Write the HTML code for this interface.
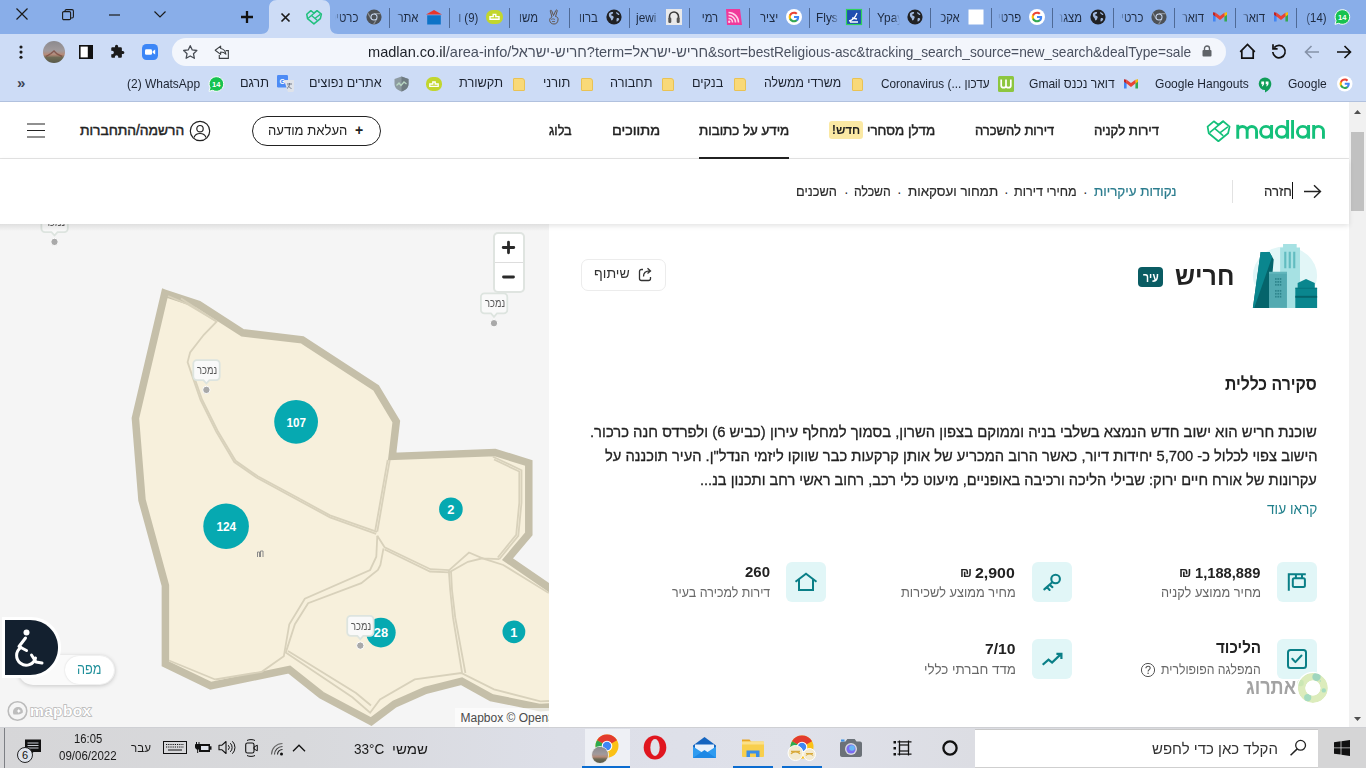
<!DOCTYPE html>
<html lang="he">
<head>
<meta charset="utf-8">
<title>madlan</title>
<style>
*{box-sizing:border-box;margin:0;padding:0}
html,body{width:1366px;height:768px;overflow:hidden;background:#fff;font-family:"Liberation Sans",sans-serif;color:#222}
.a{position:absolute;white-space:nowrap}
.r{direction:rtl}
svg{position:absolute;overflow:visible}
#tabbar{left:0;top:0;width:1366px;height:34px;background:#89aee9}
#toolbar{left:0;top:34px;width:1366px;height:36px;background:#cddcf6}
#bmbar{left:0;top:70px;width:1366px;height:32px;background:#cddcf6}
.sep{position:absolute;top:7.5px;width:1px;height:20px;background:#4f6a96}
.tt{position:absolute;top:8.5px;height:17px;font-size:13.2px;line-height:17px;color:#1d2a40;white-space:nowrap;overflow:hidden;direction:rtl;text-align:right}
.fav{position:absolute;top:9px}
.bm{position:absolute;top:78px;font-size:12px;line-height:14px;color:#1c2330;white-space:nowrap}
.fold{position:absolute;top:77.5px;width:11.5px;height:13.5px;background:#f9d978;border:1px solid #e9c254;border-radius:1px 3px 1px 1px}
.nv{top:121px;font-size:14.500px;line-height:18px;font-weight:bold;color:#222}
.sn{top:182.800px;font-size:14px;line-height:18px;color:#333}
.sb{width:40px;height:40px;border-radius:6px;background:#e1f6f7}
.ts{display:inline-block;transform:scaleX(.86);transform-origin:100% 50%}
.tl{display:inline-block;transform:scaleX(.9);transform-origin:0 50%}
</style>
</head>
<body>
<!-- ============ TAB BAR ============ -->
<div id="tabbar" class="a"></div>
<div id="toolbar" class="a"></div>
<div id="bmbar" class="a"></div>
<div class="a" style="left:0;top:101px;width:1366px;height:1px;background:#b1c1de"></div>
<!--TABS-->
<svg class="fav" style="left:1334.0px;top:9px" width="16" height="16" viewBox="0 0 16 16"><path d="M1 15.300l1.100-3.600A7.300 7.300 0 1 1 4.700 14.300z" fill="#17c24f" stroke="#fff" stroke-width="1" stroke-linejoin="round"/><text x="8.200" y="10.700" font-family="Liberation Sans" font-size="7.500" font-weight="bold" fill="#fff" text-anchor="middle">14</text></svg>
<div class="tt" style="left:1303.0px;width:23px;-webkit-mask-image:linear-gradient(to right,transparent 0,#000 7px)"><span class="ts">(14)</span></div>
<svg class="fav" style="left:1273.0px;top:9px" width="16" height="16" viewBox="0 0 16 16"><path d="M1 3.200v9.300h2.600V6.400z" fill="#4285F4"/><path d="M15 3.200v9.300h-2.600V6.400z" fill="#34A853"/><path d="M12.400 3.700 15 3.200v2.500l-2.600 2z" fill="#FBBC05"/><path d="M3.600 3.700 1 3.200v2.500l2.600 2z" fill="#C5221F"/><path d="M3.600 3.700 8 7.100l4.400-3.400v3.900L8 11 3.600 7.600z" fill="#EA4335"/></svg>
<div class="tt" style="left:1242.0px;width:23px;-webkit-mask-image:linear-gradient(to right,transparent 0,#000 7px)"><span class="ts">דואר</span></div>
<div class="sep" style="left:1296.0px"></div>
<svg class="fav" style="left:1212.0px;top:9px" width="16" height="16" viewBox="0 0 16 16"><path d="M1 3.200v9.300h2.600V6.400z" fill="#4285F4"/><path d="M15 3.200v9.300h-2.600V6.400z" fill="#34A853"/><path d="M12.400 3.700 15 3.200v2.500l-2.600 2z" fill="#FBBC05"/><path d="M3.600 3.700 1 3.200v2.500l2.600 2z" fill="#C5221F"/><path d="M3.600 3.700 8 7.100l4.400-3.400v3.900L8 11 3.600 7.600z" fill="#EA4335"/></svg>
<div class="tt" style="left:1181.0px;width:23px;-webkit-mask-image:linear-gradient(to right,transparent 0,#000 7px)"><span class="ts">דואר</span></div>
<div class="sep" style="left:1235.0px"></div>
<svg class="fav" style="left:1151.0px;top:9px" width="16" height="16" viewBox="0 0 16 16"><circle cx="8" cy="8" r="7.600" fill="#4d5156"/><path d="M8 4.600h6.800M5.100 9.700 1.700 3.900M10.900 9.700 7.500 15.500" stroke="#8a8f96" stroke-width="1.200"/><circle cx="8" cy="8" r="3.500" fill="#cddcf6"/><circle cx="8" cy="8" r="2.500" fill="#4d5156"/></svg>
<div class="tt" style="left:1120.0px;width:23px;-webkit-mask-image:linear-gradient(to right,transparent 0,#000 7px)"><span class="ts">כרטיס</span></div>
<div class="sep" style="left:1174.0px"></div>
<svg class="fav" style="left:1090.0px;top:9px" width="16" height="16" viewBox="0 0 16 16"><circle cx="8" cy="8" r="7.600" fill="#202124"/><path d="M3 4.500c1.500-1.500 3-1.800 4-1.500 .5 1-.5 2-1.500 2.300-.8.500-.3 1.500.7 1.500 1.200.2 1.800 1 1.300 2.200-.5 1-1 2.500-2 2.500-.8-.800-.5-2-1.300-2.700C3.200 8 2.500 6.500 3 4.500zM10 3c1.500.3 3 1.500 3.500 3-.8.300-1.500 0-2-.8-.8-.2-1.500-1.200-1.500-2.200zM11 9c1-.3 2 .2 2.300 1-.5 1.300-1.500 2.300-2.500 2.800-.5-1.200-.4-2.800.2-3.800z" fill="#9fb6dc"/></svg>
<div class="tt" style="left:1059.0px;width:23px;-webkit-mask-image:linear-gradient(to right,transparent 0,#000 7px)"><span class="ts">מצגת</span></div>
<div class="sep" style="left:1113.0px"></div>
<svg class="fav" style="left:1029.0px;top:9px" width="16" height="16" viewBox="0 0 48 48"><circle cx="24" cy="24" r="24" fill="#fff"/><g transform="translate(6.500,6.500) scale(.73)"><path fill="#4285F4" d="M45.1 24.5c0-1.6-.1-3.100-.4-4.500H24v8.500h11.800c-.5 2.700-2.100 5.100-4.400 6.600v5.500h7.100c4.200-3.800 6.600-9.500 6.600-16.100z"/><path fill="#34A853" d="M24 46c5.900 0 10.900-2 14.500-5.300l-7.100-5.500c-2 1.300-4.500 2.100-7.400 2.100-5.700 0-10.500-3.800-12.300-9H4.400v5.700C8 41.100 15.400 46 24 46z"/><path fill="#FBBC05" d="M11.700 28.300c-.4-1.300-.7-2.800-.7-4.300s.3-2.900.7-4.300V14H4.400C2.900 17 2 20.400 2 24s.9 7 2.400 10l7.300-5.700z"/><path fill="#EA4335" d="M24 10.700c3.200 0 6.100 1.100 8.400 3.300l6.300-6.300C34.900 4.200 29.900 2 24 2 15.400 2 8 6.900 4.400 14l7.300 5.700c1.800-5.200 6.600-9 12.300-9z"/></g></svg>
<div class="tt" style="left:998.0px;width:23px;-webkit-mask-image:linear-gradient(to right,transparent 0,#000 7px)"><span class="ts">פרטי</span></div>
<div class="sep" style="left:1052.0px"></div>
<svg class="fav" style="left:968.0px;top:9px" width="16" height="16" viewBox="0 0 16 16"><rect x="0.500" y="0.500" width="15" height="15" fill="#fff"/></svg>
<div class="tt" style="left:937.0px;width:23px;-webkit-mask-image:linear-gradient(to right,transparent 0,#000 7px)"><span class="ts">אקכ</span></div>
<div class="sep" style="left:991.0px"></div>
<svg class="fav" style="left:907.0px;top:9px" width="16" height="16" viewBox="0 0 16 16"><circle cx="8" cy="8" r="7.600" fill="#202124"/><path d="M3 4.500c1.500-1.500 3-1.800 4-1.500 .5 1-.5 2-1.500 2.300-.8.500-.3 1.500.7 1.500 1.200.2 1.800 1 1.300 2.200-.5 1-1 2.500-2 2.500-.8-.800-.5-2-1.300-2.700C3.200 8 2.500 6.500 3 4.500zM10 3c1.500.3 3 1.500 3.500 3-.8.300-1.500 0-2-.8-.8-.2-1.500-1.200-1.500-2.200zM11 9c1-.3 2 .2 2.300 1-.5 1.300-1.500 2.300-2.500 2.800-.5-1.200-.4-2.800.2-3.800z" fill="#9fb6dc"/></svg>
<div class="tt" style="left:877.0px;width:23px;direction:ltr;text-align:left;-webkit-mask-image:linear-gradient(to left,transparent 0,#000 7px)"><span class="tl">Ypay</span></div>
<div class="sep" style="left:930.0px"></div>
<svg class="fav" style="left:846.0px;top:9px" width="16" height="16" viewBox="0 0 16 16"><rect x="0.500" y="0.500" width="15" height="15" fill="#1f4fb0" stroke="#2fd35a" stroke-width="1.200"/><path d="M3 12c3-.5 6-3 8-8M4 13h8M6 9l5 1" stroke="#fff" stroke-width="1.300" fill="none"/></svg>
<div class="tt" style="left:816.0px;width:23px;direction:ltr;text-align:left;-webkit-mask-image:linear-gradient(to left,transparent 0,#000 7px)"><span class="tl">Flys</span></div>
<div class="sep" style="left:869.0px"></div>
<svg class="fav" style="left:786.0px;top:9px" width="16" height="16" viewBox="0 0 48 48"><circle cx="24" cy="24" r="24" fill="#fff"/><g transform="translate(6.500,6.500) scale(.73)"><path fill="#4285F4" d="M45.1 24.5c0-1.6-.1-3.100-.4-4.500H24v8.500h11.800c-.5 2.700-2.100 5.100-4.400 6.600v5.500h7.100c4.200-3.800 6.600-9.500 6.600-16.100z"/><path fill="#34A853" d="M24 46c5.900 0 10.900-2 14.500-5.300l-7.100-5.500c-2 1.300-4.500 2.100-7.400 2.100-5.700 0-10.500-3.800-12.300-9H4.400v5.700C8 41.100 15.400 46 24 46z"/><path fill="#FBBC05" d="M11.700 28.300c-.4-1.300-.7-2.800-.7-4.300s.3-2.900.7-4.300V14H4.400C2.900 17 2 20.400 2 24s.9 7 2.400 10l7.300-5.700z"/><path fill="#EA4335" d="M24 10.700c3.200 0 6.100 1.100 8.400 3.300l6.300-6.300C34.900 4.200 29.900 2 24 2 15.400 2 8 6.900 4.400 14l7.300 5.700c1.800-5.200 6.600-9 12.300-9z"/></g></svg>
<div class="tt" style="left:755.0px;width:23px;-webkit-mask-image:linear-gradient(to right,transparent 0,#000 7px)"><span class="ts">יציר</span></div>
<div class="sep" style="left:809.0px"></div>
<svg class="fav" style="left:726.0px;top:9px" width="16" height="16" viewBox="0 0 16 16"><path d="M0 0h14l2 16H1z" fill="#f0389a"/><path d="M2.500 6.500a7 7 0 0 1 7 7M2.500 3.500a10 10 0 0 1 10 10M2.500 9.500a4 4 0 0 1 4 4" stroke="#ffd0e8" stroke-width="1.600" fill="none"/><circle cx="3.200" cy="12.800" r="1.200" fill="#ffd0e8"/></svg>
<div class="tt" style="left:695.0px;width:23px;-webkit-mask-image:linear-gradient(to right,transparent 0,#000 7px)"><span class="ts">רמי</span></div>
<div class="sep" style="left:749.0px"></div>
<svg class="fav" style="left:666.0px;top:9px" width="16" height="16" viewBox="0 0 16 16"><rect width="16" height="16" fill="#e9e9ea"/><path d="M3.500 10V7.500a4.500 4.500 0 0 1 9 0V10" stroke="#3a3a3a" stroke-width="1.600" fill="none"/><rect x="2.300" y="8.500" width="3" height="5.500" rx="1.200" fill="#555"/><rect x="10.700" y="8.500" width="3" height="5.500" rx="1.200" fill="#555"/></svg>
<div class="tt" style="left:636.0px;width:23px;direction:ltr;text-align:left;-webkit-mask-image:linear-gradient(to left,transparent 0,#000 7px)"><span class="tl">jewi</span></div>
<div class="sep" style="left:689.0px"></div>
<svg class="fav" style="left:606.0px;top:9px" width="16" height="16" viewBox="0 0 16 16"><circle cx="8" cy="8" r="7.600" fill="#202124"/><path d="M3 4.500c1.500-1.500 3-1.800 4-1.500 .5 1-.5 2-1.500 2.300-.8.500-.3 1.500.7 1.500 1.200.2 1.800 1 1.300 2.200-.5 1-1 2.500-2 2.500-.8-.800-.5-2-1.300-2.700C3.200 8 2.500 6.500 3 4.500zM10 3c1.500.3 3 1.500 3.500 3-.8.300-1.500 0-2-.8-.8-.2-1.500-1.200-1.500-2.200zM11 9c1-.3 2 .2 2.300 1-.5 1.300-1.500 2.300-2.500 2.800-.5-1.200-.4-2.800.2-3.800z" fill="#9fb6dc"/></svg>
<div class="tt" style="left:575.0px;width:23px;-webkit-mask-image:linear-gradient(to right,transparent 0,#000 7px)"><span class="ts">ברוו</span></div>
<div class="sep" style="left:629.0px"></div>
<svg class="fav" style="left:546.0px;top:9px" width="16" height="16" viewBox="0 0 16 16"><path d="M6 8 4.300 2.200c-.3-1 1-1.400 1.400-.4L7.500 6.500 9.800 1.500c.4-1 1.800-.5 1.400.5L9.500 7.500c2 .3 2.800 1.500 2.500 3.500-.3 2.500-1.500 4-4 4-2.300 0-3.800-1.200-4.300-3.300-.3-1.500.5-2.700 1.600-3.200z" fill="none" stroke="#5b4a3a" stroke-width="0.900"/><path d="M5 10.500c1-.8 2.800-.8 4 0M6 12.500h3" stroke="#5b4a3a" stroke-width="0.700" fill="none"/></svg>
<div class="tt" style="left:515.0px;width:23px;-webkit-mask-image:linear-gradient(to right,transparent 0,#000 7px)"><span class="ts">משו</span></div>
<div class="sep" style="left:569.0px"></div>
<svg class="fav" style="left:486.0px;top:9px" width="17" height="16" viewBox="0 0 17 16"><rect x="0" y="1" width="17" height="14" rx="6.500" fill="#c2d62e"/><path d="M4 10.200h9v-2.600h-3.200V5.400H7.200v2.200H4z" fill="none" stroke="#fff" stroke-width="1.400"/></svg>
<div class="tt" style="left:455.0px;width:23px;-webkit-mask-image:linear-gradient(to right,transparent 0,#000 7px)"><span class="ts">(9) ו</span></div>
<div class="sep" style="left:509.0px"></div>
<svg class="fav" style="left:426.0px;top:9px" width="16" height="16" viewBox="0 0 16 16"><path d="M0 5.500 8 1l8 4.500z" fill="#e8352a"/><rect x="1.200" y="6.300" width="13.600" height="9.200" fill="#0d73c7"/></svg>
<div class="tt" style="left:395.0px;width:23px;-webkit-mask-image:linear-gradient(to right,transparent 0,#000 7px)"><span class="ts">אתר</span></div>
<div class="sep" style="left:449.0px"></div>
<svg class="fav" style="left:366.0px;top:9px" width="16" height="16" viewBox="0 0 16 16"><circle cx="8" cy="8" r="7.600" fill="#4d5156"/><path d="M8 4.600h6.800M5.100 9.700 1.700 3.900M10.900 9.700 7.500 15.500" stroke="#8a8f96" stroke-width="1.200"/><circle cx="8" cy="8" r="3.500" fill="#cddcf6"/><circle cx="8" cy="8" r="2.500" fill="#4d5156"/></svg>
<div class="tt" style="left:335.0px;width:23px;-webkit-mask-image:linear-gradient(to right,transparent 0,#000 7px)"><span class="ts">כרטיס</span></div>
<div class="sep" style="left:389.0px"></div>
<svg style="left:261px;top:0" width="78" height="34" viewBox="0 0 78 34"><path d="M0 34c5 0 8-3 8-8V8c0-5 3-8 8-8h45c5 0 8 3 8 8v18c0 5 3 8 8 8z" fill="#cddcf6"/></svg>
<svg class="fav" style="left:305px;top:9.5px" width="18" height="16" viewBox="0 0 18 16"><g transform="translate(9.050,7.300) scale(.665) translate(-1218.600,-131.250)" fill="none" stroke="#21c07e" stroke-linejoin="round" stroke-linecap="round"><path d="M1213.800 121.300 1207.600 126.600 1208.800 133.300 1218.400 141.200 1228.100 133.300 1229.600 126.600 1223.100 121.300 1218.400 124.800z" stroke-width="2.300"/><path d="M1223.100 121.300 1210.200 132.200M1215.200 128.900 1222.800 135.400M1227.500 127.200 1220.200 132.700" stroke-width="2"/></g></svg>
<svg style="left:279.500px;top:11.500px" width="11" height="11" viewBox="0 0 11 11"><path d="M1.500 1.500l8 8M9.500 1.500l-8 8" stroke="#1b1b1b" stroke-width="1.700"/></svg>
<svg style="left:240px;top:10px" width="14" height="14" viewBox="0 0 14 14"><path d="M7 1v12M1 7h12" stroke="#111" stroke-width="2.300"/></svg>
<svg style="left:153px;top:10px" width="14" height="9" viewBox="0 0 14 9"><path d="M1.500 1.500 7 7l5.500-5.500" stroke="#1b1b1b" stroke-width="1.200" fill="none"/></svg>
<svg style="left:109px;top:14px" width="11" height="2" viewBox="0 0 11 2"><path d="M0 1h11" stroke="#1b1b1b" stroke-width="1.200"/></svg>
<svg style="left:62px;top:9px" width="12" height="11" viewBox="0 0 12 11"><rect x="0.600" y="2.600" width="8" height="8" rx="1.200" fill="none" stroke="#1b1b1b" stroke-width="1.100"/><path d="M3 2.600V2c0-.8.600-1.400 1.400-1.400H10c.8 0 1.400.600 1.400 1.400v5.600c0 .8-.6 1.400-1.400 1.400h-1.400" fill="none" stroke="#1b1b1b" stroke-width="1.100"/></svg>
<svg style="left:16px;top:8px" width="12" height="12" viewBox="0 0 12 12"><path d="M0.500 0.500l11 11M11.500 0.500l-11 11" stroke="#1b1b1b" stroke-width="1.200"/></svg>
<!--/TABS-->
<!--TOOLBAR-->
<!-- URL pill -->
<div class="a" style="left:172px;top:38px;width:1053.500px;height:28px;border-radius:14px;background:#f3f6fc"></div>
<!-- lock -->
<svg style="left:1202px;top:45px" width="10" height="12" viewBox="0 0 10 12"><rect x="0.500" y="5" width="9" height="6.500" rx="1" fill="#5f6368"/><path d="M2.500 5V3.500a2.500 2.500 0 0 1 5 0V5" stroke="#5f6368" stroke-width="1.400" fill="none"/></svg>
<!-- star -->
<svg style="left:182px;top:44px" width="16.500" height="16.500" viewBox="0 0 18 18"><path d="M9 1.800l2.200 4.700 5 .6-3.700 3.500 1 5L9 13.100l-4.500 2.500 1-5L1.800 7.100l5-.6z" fill="none" stroke="#474c54" stroke-width="1.400" stroke-linejoin="round"/></svg>
<!-- share -->
<svg style="left:213.500px;top:45.300px" width="16" height="14.500" viewBox="0 0 17 16"><path d="M7 1.200 1 5.800l6 4.600V7.800c2.500 0 4.300.6 5.800 2.400C12.300 6.500 10 4.300 7 3.900z" fill="none" stroke="#3c4043" stroke-width="1.200" stroke-linejoin="round"/><path d="M5.500 11v3.800h10V6.200h-3" fill="none" stroke="#3c4043" stroke-width="1.200"/></svg>
<!-- zoom ext -->
<svg style="left:142px;top:44px" width="16" height="16" viewBox="0 0 16 16"><rect width="16" height="16" rx="4.500" fill="#3b86f7"/><rect x="3" y="5.200" width="7" height="5.600" rx="1.300" fill="#fff"/><path d="M10.600 7.300 13.200 5.600v4.800L10.600 8.700z" fill="#fff"/></svg>
<!-- puzzle -->
<svg style="left:110px;top:44px" width="15" height="15" viewBox="0 0 24 24"><path d="M20.500 11H19V7c0-1.100-.9-2-2-2h-4V3.500a2.500 2.500 0 0 0-5 0V5H4c-1.100 0-2 .9-2 2v3.800h1.500a2.700 2.700 0 0 1 0 5.400H2V20c0 1.100.9 2 2 2h3.800v-1.500a2.700 2.700 0 0 1 5.400 0V22H17c1.100 0 2-.9 2-2v-4h1.500a2.500 2.500 0 0 0 0-5z" fill="#1b1b1b"/></svg>
<!-- side panel -->
<svg style="left:79px;top:45px" width="14" height="14" viewBox="0 0 14 14"><rect x="0.800" y="0.800" width="12.400" height="12.400" fill="#fff" stroke="#111" stroke-width="1.600"/><rect x="8.800" y="0.800" width="4.400" height="12.400" fill="#111"/></svg>
<!-- avatar -->
<div class="a" style="left:43px;top:41px;width:22px;height:22px;border-radius:11px;background:linear-gradient(180deg,#8c8a8e 0%,#a19a9c 45%,#b58a78 62%,#6e6a55 75%,#595a4a 100%)"></div>
<svg style="left:43px;top:41px" width="22" height="22" viewBox="0 0 22 22"><path d="M3 15.500 8 12.500l3-2.500 3 3 5 2.300" stroke="#7a4a40" stroke-width="1.400" fill="none" opacity=".8"/></svg>
<!-- menu dots -->
<svg style="left:19.400px;top:45.200px" width="4" height="14" viewBox="0 0 4 14"><circle cx="2" cy="2" r="1.550" fill="#1b1b1b"/><circle cx="2" cy="7.100" r="1.550" fill="#1b1b1b"/><circle cx="2" cy="12.200" r="1.550" fill="#1b1b1b"/></svg>
<!-- home -->
<svg style="left:1239px;top:43px" width="17" height="17" viewBox="0 0 17 17"><path d="M2.800 7.800v7.400h11.400V7.800M1.200 8.800 8.500 1.500l7.300 7.300" fill="none" stroke="#111" stroke-width="1.700" stroke-linejoin="miter"/></svg>
<!-- reload -->
<svg style="left:1271px;top:43px" width="16" height="17" viewBox="0 0 16 17"><path d="M3.200 4.600A6.200 6.200 0 1 1 1.800 9" fill="none" stroke="#111" stroke-width="1.700"/><path d="M2 1.200v4.600h4.600" fill="none" stroke="#111" stroke-width="1.700"/></svg>
<!-- back (grey) -->
<svg style="left:1304px;top:45px" width="15" height="14" viewBox="0 0 15 14"><path d="M15 7H2M7.500 1 1.500 7l6 6" fill="none" stroke="#8592a8" stroke-width="1.600"/></svg>
<!-- forward -->
<svg style="left:1337px;top:45px" width="15" height="14" viewBox="0 0 15 14"><path d="M0 7h13M7.500 1l6 6-6 6" fill="none" stroke="#111" stroke-width="1.600"/></svg>
<!--/TOOLBAR-->
<!--BOOKMARKS-->
<div class="bm" style="left:17px;top:75px;font-size:15px;line-height:16px;font-weight:bold;color:#3b4454">»</div>
<div class="fold" style="left:734px"></div>
<div class="fold" style="left:662px"></div>
<div class="fold" style="left:581px"></div>
<div class="fold" style="left:513px"></div>
<div class="fold" style="left:851.5px"></div>
<svg style="left:1336.5px;top:76px" width="15.500" height="15.500" viewBox="0 0 48 48"><circle cx="24" cy="24" r="24" fill="#fff"/><g transform="translate(6.500,6.500) scale(.73)"><path fill="#4285F4" d="M45.1 24.500c0-1.600-.1-3.100-.4-4.500H24v8.500h11.800c-.5 2.700-2.100 5.100-4.400 6.600v5.500h7.100c4.200-3.800 6.600-9.500 6.600-16.100z"/><path fill="#34A853" d="M24 46c5.900 0 10.900-2 14.500-5.300l-7.100-5.500c-2 1.300-4.500 2.100-7.400 2.100-5.700 0-10.500-3.800-12.300-9H4.400v5.700C8 41.100 15.400 46 24 46z"/><path fill="#FBBC05" d="M11.700 28.300c-.4-1.300-.7-2.800-.7-4.300s.3-2.900.7-4.300V14H4.400C2.900 17 2 20.400 2 24s.9 7 2.400 10l7.300-5.700z"/><path fill="#EA4335" d="M24 10.700c3.200 0 6.100 1.100 8.400 3.300l6.300-6.300C34.900 4.200 29.900 2 24 2 15.400 2 8 6.900 4.400 14l7.300 5.700c1.800-5.200 6.600-9 12.300-9z"/></g></svg>
<svg style="left:1258px;top:77px" width="14" height="15" viewBox="0 0 14 15"><path d="M7 .5a6.300 6.300 0 0 0 0 12.600v2.400c3.500-1.700 6.300-4.700 6.300-8.700A6.300 6.300 0 0 0 7 .5z" fill="#0f9d58"/><path d="M3.300 4.500h2.800v2.700L4.700 9.300H3.800l.8-2H3.300zM7.700 4.500h2.800v2.700L9.100 9.300H8.200l.8-2H7.700z" fill="#fff"/></svg>
<svg style="left:1123px;top:76px" width="16" height="16" viewBox="0 0 16 16"><path d="M1 3.200v9.300h2.600V6.400z" fill="#4285F4"/><path d="M15 3.200v9.300h-2.600V6.400z" fill="#34A853"/><path d="M12.400 3.700 15 3.200v2.500l-2.600 2z" fill="#FBBC05"/><path d="M3.600 3.700 1 3.200v2.500l2.600 2z" fill="#C5221F"/><path d="M3.600 3.700 8 7.100l4.400-3.400v3.900L8 11 3.600 7.600z" fill="#EA4335"/></svg>
<svg style="left:998px;top:76px" width="16" height="16" viewBox="0 0 16 16"><rect width="16" height="16" rx="1.500" fill="#8dc63f"/><path d="M3.200 3.500v6.200c0 2.600 4.800 2.600 4.800 0V3.500M8 3.500v6.200c0 2.600 4.800 2.600 4.800 0V3.500" fill="none" stroke="#fff" stroke-width="1.700"/></svg>
<svg style="left:426px;top:77px" width="16" height="14" viewBox="0 0 16 14"><rect width="16" height="14" rx="6.500" fill="#c2d62e"/><path d="M3.800 9.400h8.400V7h-3V5H6.800v2h-3z" fill="none" stroke="#fff" stroke-width="1.300"/></svg>
<svg style="left:394px;top:76px" width="15" height="16" viewBox="0 0 15 16"><path d="M7.500.5 14.500 3v5c0 3.800-3 6.300-7 7.500C3.500 14.300.5 11.800.5 8V3z" fill="#8d9aa0"/><path d="M7.500.5 14.500 3v5c0 3.800-3 6.300-7 7.500z" fill="#6f7b82"/><path d="M2.500 9.500 5 7l2 2.500L10 6l2.500 2" stroke="#b8d6c3" stroke-width="1.300" fill="none"/></svg>
<svg style="left:277px;top:75px" width="17" height="17" viewBox="0 0 17 17"><rect x="0" y="0" width="11" height="12.500" rx="1.200" fill="#4d8bf5"/><path d="M7 5h10v10.500c0 .8-.7 1.500-1.500 1.500H11z" fill="#dfe3ea"/><text x="2.500" y="8.700" font-family="Liberation Sans" font-size="7" font-weight="bold" fill="#fff">G</text><path d="M10 9h5M12.500 8v1c0 2-1 3.500-2.500 4.500M11 10.500c.8 1.500 2 2.500 3.500 3" stroke="#6b7381" stroke-width=".9" fill="none"/></svg>
<svg style="left:208px;top:76px" width="16" height="16" viewBox="0 0 16 16"><path d="M1 15.300l1.100-3.600A7.300 7.300 0 1 1 4.700 14.300z" fill="#17c24f" stroke="#fff" stroke-width="1" stroke-linejoin="round"/><text x="8.200" y="10.700" font-family="Liberation Sans" font-size="7.500" font-weight="bold" fill="#fff" text-anchor="middle">14</text></svg>
<!--BMTEXT-->
<div class="a" style="left:1288.3px;top:77.0px;font:normal 13.04px/13.04px 'Liberation Sans',sans-serif;color:#1c2330;direction:ltr;transform-origin:0 0;transform:scaleX(0.922);">Google</div>
<div class="a" style="left:1154.6px;top:77.0px;font:normal 13.04px/13.04px 'Liberation Sans',sans-serif;color:#1c2330;direction:ltr;transform-origin:0 0;transform:scaleX(0.925);">Google Hangouts</div>
<div class="a" style="left:1029.1px;top:77.0px;font:normal 13.04px/13.04px 'Liberation Sans',sans-serif;color:#1c2330;direction:rtl;transform-origin:0 0;transform:scaleX(0.925);">דואר נכנס Gmail</div>
<div class="a" style="left:880.5px;top:77.0px;font:normal 13.04px/13.04px 'Liberation Sans',sans-serif;color:#1c2330;direction:ltr;transform-origin:0 0;transform:scaleX(0.900);">Coronavirus (... <span style="direction:rtl;unicode-bidi:embed">עדכון</span></div>
<div class="a" style="left:763.9px;top:77.0px;font:normal 12.94px/12.94px 'Liberation Sans',sans-serif;color:#1c2330;direction:rtl;transform-origin:0 0;transform:scaleX(0.951);">משרדי ממשלה</div>
<div class="a" style="left:691.7px;top:77.0px;font:normal 12.94px/12.94px 'Liberation Sans',sans-serif;color:#1c2330;direction:rtl;transform-origin:0 0;transform:scaleX(0.977);">בנקים</div>
<div class="a" style="left:609.8px;top:77.0px;font:normal 12.94px/12.94px 'Liberation Sans',sans-serif;color:#1c2330;direction:rtl;transform-origin:0 0;transform:scaleX(0.980);">תחבורה</div>
<div class="a" style="left:542.5px;top:77.0px;font:normal 12.94px/12.94px 'Liberation Sans',sans-serif;color:#1c2330;direction:rtl;transform-origin:0 0;transform:scaleX(0.988);">תורני</div>
<div class="a" style="left:458.6px;top:77.0px;font:normal 12.94px/12.94px 'Liberation Sans',sans-serif;color:#1c2330;direction:rtl;transform-origin:0 0;transform:scaleX(0.986);">תקשורת</div>
<div class="a" style="left:309.4px;top:77.0px;font:normal 12.94px/12.94px 'Liberation Sans',sans-serif;color:#1c2330;direction:rtl;transform-origin:0 0;transform:scaleX(0.974);">אתרים נפוצים</div>
<div class="a" style="left:239.7px;top:77.0px;font:normal 12.94px/12.94px 'Liberation Sans',sans-serif;color:#1c2330;direction:rtl;transform-origin:0 0;transform:scaleX(0.982);">תרגם</div>
<div class="a" style="left:126.5px;top:77.0px;font:normal 13.04px/13.04px 'Liberation Sans',sans-serif;color:#1c2330;direction:ltr;transform-origin:0 0;transform:scaleX(0.918);">(2) WhatsApp</div>
<div class="a" style="left:367.5px;top:45.0px;font:normal 14.2px/14.2px 'Liberation Sans',sans-serif;color:#4a5160;direction:ltr;transform-origin:0 0;transform:scaleX(1.027);"><span style="color:#1b1f27">madlan.co.il</span>/area-info/חריש-ישראל?term=חריש-ישראל</div>
<div class="a" style="left:707.8px;top:45.0px;font:normal 14.2px/14.2px 'Liberation Sans',sans-serif;color:#4a5160;direction:ltr;transform-origin:0 0;transform:scaleX(0.967);">&amp;sort=bestReligious-asc&amp;tracking_search_source=new_search&amp;dealType=sale</div>
<!--/BMTEXT-->
<!--/BOOKMARKS-->
<!--PAGE-->
<!-- page base -->
<div class="a" style="left:0;top:102px;width:1349px;height:626px;background:#fff"></div>
<!-- scrollbar -->
<div class="a" style="left:1349px;top:102px;width:17px;height:626px;background:#f1f1f1"></div>
<div class="a" style="left:1351px;top:132px;width:13px;height:79px;background:#c1c1c1"></div>
<svg style="left:1354px;top:110px" width="7" height="4" viewBox="0 0 7 4"><path d="M0 4 3.500 0 7 4z" fill="#505050"/></svg>
<svg style="left:1354px;top:717px" width="7" height="4" viewBox="0 0 7 4"><path d="M0 0 3.500 4 7 0z" fill="#505050"/></svg>
<!-- header -->
<div class="a" style="left:0;top:158px;width:1349px;height:1px;background:#e4e4e4"></div>
<!-- logo -->
<svg style="left:1200px;top:110px" width="136" height="40" viewBox="1200 110 136 40" fill="none" stroke="#14c07a">
<g stroke-width="1.750" stroke-linejoin="round" stroke-linecap="round"><path d="M1213.800 121.300 1207.600 126.600 1208.800 133.300 1218.400 141.200 1228.100 133.300 1229.600 126.600 1223.100 121.300 1218.400 124.800z"/><path d="M1223.100 121.300 1210.200 132.200M1215.200 128.900 1222.800 135.400M1227.500 127.200 1220.200 132.700" stroke-width="1.600"/></g>
<g stroke-width="2.900">
<path d="M1237.750 124.800V138.700M1237.750 131.200a4.700 4.700 0 0 1 9.400 0V138.700M1247.150 131.200a4.700 4.700 0 0 1 9.400 0V138.700"/>
<circle cx="1266.050" cy="131.850" r="5.450"/><path d="M1271.600 125V138.700"/>
<circle cx="1281.750" cy="131.850" r="5.450"/><path d="M1287.600 120V138.700"/>
<path d="M1292.550 120V138.700"/>
<circle cx="1302.850" cy="131.850" r="5.450"/><path d="M1308.600 125V138.700"/>
<path d="M1313.650 125V138.700M1313.650 131.300a4.900 4.900 0 0 1 9.800 0V138.700"/>
</g></svg>
<!-- nav items -->
<div class="a" style="left:829px;top:121px;width:34px;height:18px;border-radius:3px;background:#fbe9a4"></div>
<div class="a" style="left:699px;top:157px;width:90px;height:2px;background:#222"></div>
<div class="a" style="left:252px;top:116px;width:129px;height:30px;border:1px solid #222;border-radius:15px"></div>
<div class="a" style="left:355px;top:121px;font-size:14px;line-height:18px;font-weight:bold;color:#222">+</div>
<svg style="left:189px;top:120px" width="22" height="22" viewBox="0 0 22 22"><circle cx="11" cy="11" r="9.700" fill="none" stroke="#222" stroke-width="1.200"/><circle cx="11" cy="8.700" r="3.200" fill="none" stroke="#222" stroke-width="1.200"/><path d="M5 17.500c1-3 3.500-4 6-4s5 1 6 4" fill="none" stroke="#222" stroke-width="1.200"/></svg>
<svg style="left:27px;top:123px" width="18" height="15" viewBox="0 0 18 15"><path d="M0 1h18M0 7.500h18M0 14h18" stroke="#222" stroke-width="1.100"/></svg>
<!-- subnav -->
<div class="a" style="left:0;top:159px;width:1349px;height:65px;background:#fff;box-shadow:0 2px 5px rgba(0,0,0,.11)"></div>
<svg style="left:1304px;top:184px" width="18" height="15" viewBox="0 0 18 15"><path d="M0 7.500h16M10 1.200l6.500 6.300-6.500 6.300" fill="none" stroke="#222" stroke-width="1.400"/></svg>
<div class="a" style="left:1292px;top:182px;width:1px;height:17px;background:#111"></div>
<div class="a" style="left:1232px;top:180px;width:1px;height:23px;background:#e2e2e2"></div>
<div class="a sn" style="left:1083px">·</div>
<div class="a sn" style="left:1004px">·</div>
<div class="a sn" style="left:897px">·</div>
<div class="a sn" style="left:844px">·</div>
<!--NAVTEXT-->
<div class="a" style="left:1094.0px;top:123.8px;font:normal 13.78px/13.78px 'Liberation Sans',sans-serif;color:#222;direction:rtl;transform-origin:0 0;transform:scaleX(0.955);-webkit-text-stroke:0.45px #222;">דירות לקניה</div>
<div class="a" style="left:974.5px;top:123.8px;font:normal 13.78px/13.78px 'Liberation Sans',sans-serif;color:#222;direction:rtl;transform-origin:0 0;transform:scaleX(0.941);-webkit-text-stroke:0.45px #222;">דירות להשכרה</div>
<div class="a" style="left:867.0px;top:123.8px;font:normal 13.78px/13.78px 'Liberation Sans',sans-serif;color:#222;direction:rtl;transform-origin:0 0;transform:scaleX(0.971);-webkit-text-stroke:0.45px #222;">מדלן מסחרי</div>
<div class="a" style="left:832.0px;top:124.4px;font:bold 12.1px/12.1px 'Liberation Sans',sans-serif;color:#222;direction:rtl;transform-origin:0 0;transform:scaleX(0.963);">חדש!</div>
<div class="a" style="left:699.0px;top:123.8px;font:normal 13.78px/13.78px 'Liberation Sans',sans-serif;color:#222;direction:rtl;transform-origin:0 0;transform:scaleX(0.968);-webkit-text-stroke:0.45px #222;">מידע על כתובות</div>
<div class="a" style="left:612.0px;top:123.8px;font:normal 13.78px/13.78px 'Liberation Sans',sans-serif;color:#222;direction:rtl;transform-origin:0 0;transform:scaleX(1.045);-webkit-text-stroke:0.45px #222;">מתווכים</div>
<div class="a" style="left:549.0px;top:123.8px;font:normal 13.78px/13.78px 'Liberation Sans',sans-serif;color:#222;direction:rtl;transform-origin:0 0;transform:scaleX(0.920);-webkit-text-stroke:0.45px #222;">בלוג</div>
<div class="a" style="left:268.0px;top:123.8px;font:normal 13.78px/13.78px 'Liberation Sans',sans-serif;color:#222;direction:rtl;transform-origin:0 0;transform:scaleX(0.951);">העלאת מודעה</div>
<div class="a" style="left:80.0px;top:123.8px;font:normal 13.78px/13.78px 'Liberation Sans',sans-serif;color:#222;direction:rtl;transform-origin:0 0;transform:scaleX(1.000);-webkit-text-stroke:0.45px #222;">הרשמה/התחברות</div>
<div class="a" style="left:1264.0px;top:184.8px;font:normal 13.61px/13.61px 'Liberation Sans',sans-serif;color:#2a2a2a;direction:rtl;transform-origin:0 0;transform:scaleX(0.963);-webkit-text-stroke:0.2px #2a2a2a;">חזרה</div>
<div class="a" style="left:1094.0px;top:184.8px;font:normal 13.61px/13.61px 'Liberation Sans',sans-serif;color:#2b7c8e;direction:rtl;transform-origin:0 0;transform:scaleX(0.982);-webkit-text-stroke:0.2px #2b7c8e;">נקודות עיקריות</div>
<div class="a" style="left:1014.0px;top:184.8px;font:normal 13.61px/13.61px 'Liberation Sans',sans-serif;color:#2a2a2a;direction:rtl;transform-origin:0 0;transform:scaleX(0.925);-webkit-text-stroke:0.2px #2a2a2a;">מחירי דירות</div>
<div class="a" style="left:908.0px;top:184.8px;font:normal 13.61px/13.61px 'Liberation Sans',sans-serif;color:#2a2a2a;direction:rtl;transform-origin:0 0;transform:scaleX(0.978);-webkit-text-stroke:0.2px #2a2a2a;">תמחור ועסקאות</div>
<div class="a" style="left:853.6px;top:184.8px;font:normal 13.61px/13.61px 'Liberation Sans',sans-serif;color:#2a2a2a;direction:rtl;transform-origin:0 0;transform:scaleX(0.897);-webkit-text-stroke:0.2px #2a2a2a;">השכלה</div>
<div class="a" style="left:796.1px;top:184.8px;font:normal 13.61px/13.61px 'Liberation Sans',sans-serif;color:#2a2a2a;direction:rtl;transform-origin:0 0;transform:scaleX(0.940);-webkit-text-stroke:0.2px #2a2a2a;">השכנים</div>
<!--/NAVTEXT-->
<!--/PAGE-->
<!--MAP-->
<div class="a" id="map" style="left:0;top:224px;width:549px;height:504px;background:#f5f5f5;overflow:hidden">
<svg style="left:0;top:-224px" width="549" height="728" viewBox="0 0 549 728">
<!-- fill + thick border -->
<path id="mp" d="M164.800 293.200 198.600 304.500 242.700 332.800 302.300 339.800 376.100 387.900 396.300 421.500 392.200 456.400 495 452.500 528.800 462.900 528.800 533.800 507.500 559.200 560 595.200 560 706 540.500 707.600 491.300 697.600 461.700 681.200 425.600 690.300 394.600 704 371.200 721.600 321.400 695 289.300 669.600 210.700 685.700 165.400 664 165.400 585.500 142 500 135.400 418.200z" fill="#f7f0dc" stroke="#c5bfa9" stroke-width="7.500" stroke-linejoin="miter"/>
<g fill="none" stroke="#d8d1bb" stroke-width="1.800">
<!-- L1 -->
<path d="M168 296 187.600 304.200 216.600 321.600 203.800 334.800 190.100 352.500 187.600 362.100 192.500 376.600 200.500 400 216.200 431.600 234.300 462 256.500 477.500 330 517.400 376.100 533.800"/>
<path d="M181 298.500 216.600 321.600"/>
<path d="M194.200 377 202 399.500 217.700 431 235.600 460.800 257.700 476.300 300 499"/>
<path d="M300 499 330 515.400 377 531.800"/>
<!-- L2 double -->
<path d="M389.800 459.800 384.500 490 377.300 531.700"/>
<path d="M387.700 459.800 382.400 490 375.200 530.700"/>
<!-- L3 double -->
<path d="M377.300 535.800 376.300 556.700 370.100 570 304.800 598.700 289.300 624.200 283.800 656.300 261.700 671.800 215.200 679.500"/>
<path d="M383.500 548.300 380.400 565 377.900 570 361.300 583.200 308.100 603.200 294.900 624.200 286 651.900"/>
<!-- L4 -->
<path d="M377.300 535.800 384.600 547.300 430.400 569.200 449.200 570.200 459.600 560.800 469 552.500 482.500 558.300 499.200 559.200"/>
<path d="M384.600 549.500 430 571.500 449.200 572.400 467.900 561.800 482.500 558.300 503.300 565 548.800 593.100"/>
<!-- L5 -->
<path d="M448.800 570.200 450.200 590 453 617.400 462.100 673"/>
<path d="M451 571 452 590 455.200 617.400 465.400 673"/>
<!-- L6 -->
<path d="M492.900 456.700 521.500 470.200 521.500 502.500 518.300 535.800 499.200 559.200"/>
<path d="M494 459.500 519.300 471.500 519.300 502.500 516.200 534.800 497.800 557.500"/>
<!-- L8 bottom inner -->
<path d="M285 652 352.400 697.200 370.100 712.700 380 699.400 414.700 679.400 461.200 673 494 689.400 540.500 701.300 549 701"/>
<path d="M288 651 356 693 371 705.500"/>
<path d="M215.200 679.500 169 660.500"/>
</g>
<!-- tiny poi -->
<path d="M257.500 557v-5h2v5M260.500 557v-6h2.500v6" stroke="#8a8a8a" stroke-width="1" fill="none"/>
<!-- clusters -->
<g fill="#06a9b1"><circle cx="296.100" cy="421.800" r="21.900"/><circle cx="226.100" cy="526.200" r="22.800"/><circle cx="450.900" cy="509.200" r="11.800"/><circle cx="380.900" cy="632.600" r="14.800"/><circle cx="513.900" cy="631.800" r="11.400"/></g>
<g font-family="Liberation Sans, sans-serif" font-weight="bold" fill="#fff" text-anchor="middle"><text x="296.300" y="426.600" font-size="12.900" textLength="19.500" lengthAdjust="spacingAndGlyphs">107</text><text x="226.300" y="531.300" font-size="12.900" textLength="19.800" lengthAdjust="spacingAndGlyphs">124</text><text x="450.900" y="513.900" font-size="12.900">2</text><text x="380.900" y="637.300" font-size="12.900">28</text><text x="513.900" y="636.500" font-size="12.900">1</text></g>
<!-- sold labels -->
<g>
<g id="sold1"><circle cx="206.400" cy="389.900" r="3.700" fill="#a9a9a9" stroke="#fff" stroke-width="1"/><path d="M196.800 360.100h19.400a3.500 3.500 0 0 1 3.500 3.500v13a3.500 3.500 0 0 1-3.500 3.500h-6.800l-3 3.400-3-3.400h-6.600a3.500 3.500 0 0 1-3.500-3.500v-13a3.500 3.500 0 0 1 3.500-3.500z" fill="#f9f9f9" stroke="#dde4df" stroke-width="1.800"/></g>
<g transform="translate(287.600,-66.700)"><circle cx="206.400" cy="389.900" r="3.700" fill="#a9a9a9" stroke="#fff" stroke-width="1"/><path d="M196.800 360.100h19.400a3.500 3.500 0 0 1 3.500 3.500v13a3.500 3.500 0 0 1-3.500 3.500h-6.800l-3 3.400-3-3.400h-6.600a3.500 3.500 0 0 1-3.500-3.500v-13a3.500 3.500 0 0 1 3.500-3.500z" fill="#f9f9f9" stroke="#dde4df" stroke-width="1.800"/></g>
<g transform="translate(153.900,255.700)"><circle cx="206.400" cy="389.900" r="3.700" fill="#a9a9a9" stroke="#fff" stroke-width="1"/><path d="M196.800 360.100h19.400a3.500 3.500 0 0 1 3.500 3.500v13a3.500 3.500 0 0 1-3.500 3.500h-6.800l-3 3.400-3-3.400h-6.600a3.500 3.500 0 0 1-3.500-3.500v-13a3.500 3.500 0 0 1 3.500-3.500z" fill="#f9f9f9" stroke="#dde4df" stroke-width="1.800"/></g>
<g transform="translate(-151.900,-148)"><circle cx="206.400" cy="389.900" r="3.700" fill="#a9a9a9" stroke="#fff" stroke-width="1"/><path d="M196.800 360.100h19.400a3.500 3.500 0 0 1 3.500 3.500v13a3.500 3.500 0 0 1-3.500 3.500h-6.800l-3 3.400-3-3.400h-6.600a3.500 3.500 0 0 1-3.500-3.500v-13a3.500 3.500 0 0 1 3.500-3.500z" fill="#f9f9f9" stroke="#dde4df" stroke-width="1.800"/></g>
</g>
</svg>
<!-- zoom control -->
<div class="a" style="left:494.500px;top:9.500px;width:28px;height:57px;border-radius:3px;background:#fff;box-shadow:0 0 0 2px #dfe4e0"></div>
<div class="a" style="left:494.500px;top:38px;width:28px;height:1px;background:#ddd"></div>
<svg style="left:502px;top:17px" width="13" height="13" viewBox="0 0 13 13"><path d="M6.500 1.200v10.600M1.200 6.500h10.600" stroke="#2a2a2a" stroke-width="2.800" stroke-linecap="round"/></svg>
<svg style="left:502px;top:50.800px" width="13" height="4" viewBox="0 0 13 4"><path d="M1.500 2h10" stroke="#2a2a2a" stroke-width="2.800" stroke-linecap="round"/></svg>
<!-- attribution -->
<div class="a" style="left:455px;top:484px;width:94px;height:20px;background:rgba(255,255,255,.62)"></div>
<div class="a" style="left:460.500px;top:487px;font-size:12px;line-height:14px;color:#4a4a4a">Mapbox © OpenStreetMap</div>
<!-- mapa pill -->
<div class="a" style="left:18px;top:431px;width:97px;height:30px;border-radius:15px;background:#fafafa;box-shadow:0 1px 4px rgba(0,0,0,.18)"></div>
<div class="a" style="left:65px;top:432px;width:49px;height:28px;border-radius:14px;background:#fff;box-shadow:0 0 2px rgba(0,0,0,.15)"></div>
<!-- accessibility -->
<svg style="left:2px;top:392.500px" width="60" height="64" viewBox="0 0 60 64"><path d="M0 0h28.500c17 0 30.500 13 30.500 30.500S45.500 61 28.500 61H0z" fill="#fff"/><path d="M3 3h25c15.500 0 28 12 28 27.500S43.500 58 28 58H3z" fill="#13202f"/><circle cx="24.500" cy="15.500" r="3" fill="#fff"/><path d="M23.500 21l-6.500 8.500 7.500 4" fill="none" stroke="#fff" stroke-width="3" stroke-linejoin="round" stroke-linecap="round"/><path d="M19 30.500a9.600 9.600 0 1 0 14.500 10.500" fill="none" stroke="#fff" stroke-width="3" stroke-linecap="round"/><path d="M29.500 38l4.500 7 6 1" fill="none" stroke="#fff" stroke-width="3" stroke-linecap="round" stroke-linejoin="round"/></svg>
<!-- mapbox logo -->
<svg style="left:7px;top:476px" width="88" height="22" viewBox="0 0 88 22"><circle cx="10.500" cy="11" r="9.300" fill="#f5f5f5" stroke="#b9b9b9" stroke-width="1.600" opacity=".95"/><path d="M6.500 14.500c-1.500-3 0-7 4-7.500 3.500-.4 6 2.500 5.200 5.800-2 1.800-6 2-9.200 1.700z" fill="#bdbdbd"/><path d="M11.800 8.800l.7 1.500 1.500.7-1.500.7-.7 1.500-.7-1.500-1.500-.7 1.500-.7z" fill="#fff"/><text x="23" y="16" font-family="Liberation Sans, sans-serif" font-size="15.500" font-weight="bold" fill="#fff" stroke="#b5b5b5" stroke-width="1.500" paint-order="stroke" letter-spacing=".35">mapbox</text></svg>
</div>
<div class="a" style="left:0;top:224px;width:549px;height:7px;background:linear-gradient(rgba(0,0,0,.09),rgba(0,0,0,0))"></div>
<!--MTEXT-->
<div class="a" style="left:0;top:224px;width:549px;height:504px;overflow:hidden">
<div class="a" style="left:197.0px;top:140.9px;font:normal 11.26px/11.26px 'Liberation Sans',sans-serif;color:#555;direction:rtl;transform-origin:0 0;transform:scaleX(0.835);">נמכר</div>
<div class="a" style="left:484.6px;top:74.2px;font:normal 11.26px/11.26px 'Liberation Sans',sans-serif;color:#555;direction:rtl;transform-origin:0 0;transform:scaleX(0.835);">נמכר</div>
<div class="a" style="left:350.9px;top:396.6px;font:normal 11.26px/11.26px 'Liberation Sans',sans-serif;color:#555;direction:rtl;transform-origin:0 0;transform:scaleX(0.835);">נמכר</div>
<div class="a" style="left:45.1px;top:-7.1px;font:normal 11.26px/11.26px 'Liberation Sans',sans-serif;color:#555;direction:rtl;transform-origin:0 0;transform:scaleX(0.835);">נמכר</div>
<div class="a" style="left:77.1px;top:437.9px;font:normal 14.29px/14.29px 'Liberation Sans',sans-serif;color:#1f8f9a;direction:rtl;transform-origin:0 0;transform:scaleX(0.885);">מפה</div>
</div>
<!--/MTEXT-->
<!--/MAP-->
<!--CONTENT-->
<!-- city illustration: viewBox in zoom coords (x=1100+z/5.135,y=230+z/5.135) -->
<svg style="left:1100px;top:230px" width="266" height="100.100" viewBox="0 0 1366 514">
<ellipse cx="950" cy="235" rx="165" ry="150" fill="#e2f6f7"/>
<path d="M940 72h70v18h17v310H925V90h15z" fill="#a6e1e3"/>
<path d="M946 112h11v84h-11zM969 112h11v84h-11zM992 112h11v84h-11z" fill="#62bcc0"/>
<path d="M825 113h45l14 25 8 14-22 248h-85z" fill="#05646b"/>
<path d="M825 113h45l14 25L792 400h-7z" fill="#0a868e"/>
<rect x="868" y="215" width="92" height="185" fill="#53aab1"/>
<path d="M868 215h92v10h-92z" fill="#62b6bc"/>
<g fill="#2d848b"><rect x="899" y="247" width="8" height="9"/><rect x="911" y="247" width="8" height="9"/><rect x="923" y="247" width="8" height="9"/><rect x="899" y="262" width="8" height="9"/><rect x="911" y="262" width="8" height="9"/><rect x="923" y="262" width="8" height="9"/><rect x="899" y="277" width="8" height="9"/><rect x="911" y="277" width="8" height="9"/><rect x="923" y="277" width="8" height="9"/>
<rect x="899" y="308" width="8" height="9"/><rect x="911" y="308" width="8" height="9"/><rect x="923" y="308" width="8" height="9"/><rect x="899" y="323" width="8" height="9"/><rect x="911" y="323" width="8" height="9"/><rect x="923" y="323" width="8" height="9"/><rect x="899" y="338" width="8" height="9"/><rect x="911" y="338" width="8" height="9"/><rect x="923" y="338" width="8" height="9"/></g>
<path d="M1058 252l45 20v25h12v103h-112V297h12v-25z" fill="#0a868e"/>
<path d="M1003 338h112v10h-112z" fill="#05646b"/>
<path d="M1003 297h112v4h-112z" fill="#067279"/>
</svg>
<!-- city badge -->
<div class="a" style="left:1138px;top:267px;width:25px;height:20px;border-radius:4px;background:#0a5c63"></div>
<!-- share button -->
<div class="a" style="left:581px;top:259px;width:85px;height:32px;border:1px solid #ececec;border-radius:7px;background:#fff"></div>
<svg style="left:638px;top:267px" width="15" height="15" viewBox="0 0 15 15"><path d="M5 2.500H3.500c-1 0-2 .8-2 2v7c0 1.100.9 2 2 2h7c1.100 0 2-.9 2-2V10" fill="none" stroke="#333" stroke-width="1.300"/><path d="M5.500 9.500c0-3.200 2-5.600 6.500-5.600M9.500 1.200l3 2.700-3 2.700" fill="none" stroke="#333" stroke-width="1.300"/></svg>
<!-- stat boxes -->
<div class="a sb" style="left:1277px;top:562px"></div>
<div class="a sb" style="left:1032px;top:562px"></div>
<div class="a sb" style="left:786px;top:562px"></div>
<div class="a sb" style="left:1277px;top:639px"></div>
<div class="a sb" style="left:1032px;top:639px"></div>
<!-- icons -->
<svg style="left:1277px;top:562px" width="40" height="40" viewBox="0 0 40 40" fill="none" stroke="#0a7f87" stroke-width="2"><path d="M11.800 28.800V12.200H28.800M18.900 12.200v4M25 12.200v4"/><rect x="15.800" y="16.200" width="12.100" height="8.700" rx="1.500"/></svg>
<svg style="left:1032px;top:562px" width="40" height="40" viewBox="0 0 40 40" fill="none" stroke="#0a7f87" stroke-width="2.100" stroke-linecap="round"><circle cx="23.600" cy="17" r="4.300"/><path d="M20.300 20.200 12.300 27.400M17.500 22.700l2.900 2.400M14.900 25.100l2.700 2.800"/></svg>
<svg style="left:786px;top:562px" width="40" height="40" viewBox="0 0 40 40"><path d="M9.500 19.800 20 11.800l10.500 8M13 17.500V28h14V17.500" fill="none" stroke="#0a7f87" stroke-width="2"/></svg>
<svg style="left:1277px;top:639px" width="40" height="40" viewBox="0 0 40 40" fill="none" stroke="#0a7f87" stroke-width="2"><rect x="11" y="11" width="18" height="18" rx="2.500"/><path d="M15.300 19.800l3.100 3.300 6.100-6.600" stroke-linecap="round" stroke-linejoin="round"/></svg>
<svg style="left:1032px;top:639px" width="40" height="40" viewBox="0 0 40 40" fill="none" stroke="#0a7f87" stroke-width="2.200"><path d="M10.700 25.800 16.500 20.600 20.100 23.600 28.600 15.400M24.400 14.900h5v5"/></svg>
<!-- question circle -->
<svg style="left:1140px;top:662px" width="16" height="16" viewBox="0 0 16 16"><circle cx="8" cy="8" r="6.600" fill="none" stroke="#555" stroke-width="1"/><path d="M5.900 6.300c0-1.300 1-2.100 2.200-2.100s2.100.8 2.100 1.900c0 1.500-2.100 1.600-2.100 3.300" fill="none" stroke="#555" stroke-width="1.100"/><circle cx="8.100" cy="11.300" r=".8" fill="#555"/></svg>
<!-- etrog watermark -->
<svg style="left:1290px;top:665px" width="46" height="46" viewBox="1290 665 46 46"><circle cx="1312.900" cy="688" r="11.250" fill="none" stroke="#dcecbc" stroke-width="7.500"/><g><circle cx="1316.500" cy="676.900" r="4.200" fill="#a0d6be"/><circle cx="1323.800" cy="690.400" r="2.200" fill="#a5dcc0"/><circle cx="1307.700" cy="697.600" r="3.600" fill="#a5dcc0"/><circle cx="1300.600" cy="683" r="3.200" fill="#cbe7b4"/><circle cx="1320.300" cy="681" r=".8" fill="#a5dcc0"/></g><circle cx="1312.900" cy="688" r="7.500" fill="#fff"/><circle cx="1312.900" cy="688" r="15.600" fill="none" stroke="#fff" stroke-width="1.200"/></svg>
<!--CTEXT-->
<div class="a" style="left:1175.0px;top:262.5px;font:bold 26.05px/26.05px 'Liberation Sans',sans-serif;color:#222;direction:rtl;transform-origin:0 0;transform:scaleX(0.956);">חריש</div>
<div class="a" style="left:1143.2px;top:272.1px;font:bold 12.44px/12.44px 'Liberation Sans',sans-serif;color:#fff;direction:rtl;transform-origin:0 0;transform:scaleX(0.844);">עיר</div>
<div class="a" style="left:593.8px;top:267.1px;font:normal 13.61px/13.61px 'Liberation Sans',sans-serif;color:#333;direction:rtl;transform-origin:0 0;transform:scaleX(1.033);">שיתוף</div>
<div class="a" style="left:1224.9px;top:374.6px;font:bold 18.15px/18.15px 'Liberation Sans',sans-serif;color:#222;direction:rtl;transform-origin:0 0;transform:scaleX(0.870);">סקירה כללית</div>
<div class="a" style="left:590.1px;top:424.0px;font:normal 15.13px/15.13px 'Liberation Sans',sans-serif;color:#222;direction:rtl;transform-origin:0 0;transform:scaleX(0.981);-webkit-text-stroke:0.28px #222;">שוכנת חריש הוא ישוב חדש הנמצא בשלבי בניה וממוקם בצפון השרון, בסמוך למחלף עירון (כביש 6) ולפרדס חנה כרכור.</div>
<div class="a" style="left:604.7px;top:448.4px;font:normal 15.13px/15.13px 'Liberation Sans',sans-serif;color:#222;direction:rtl;transform-origin:0 0;transform:scaleX(0.972);-webkit-text-stroke:0.28px #222;">הישוב צפוי לכלול כ- 5,700 יחידות דיור, כאשר הרוב המכריע של אותן קרקעות כבר שווקו ליזמי הנדל"ן. העיר תוכננה על</div>
<div class="a" style="left:699.8px;top:472.2px;font:normal 15.13px/15.13px 'Liberation Sans',sans-serif;color:#222;direction:rtl;transform-origin:0 0;transform:scaleX(0.966);-webkit-text-stroke:0.28px #222;">עקרונות של אורח חיים ירוק: שבילי הליכה ורכיבה באופניים, מיעוט כלי רכב, רחוב ראשי רחב ותכנון בנ...</div>
<div class="a" style="left:1266.6px;top:501.6px;font:normal 14.62px/14.62px 'Liberation Sans',sans-serif;color:#1f7f8b;direction:rtl;transform-origin:0 0;transform:scaleX(0.936);">קראו עוד</div>
<div class="a" style="left:1195.0px;top:565.5px;font:bold 14.06px/14.06px 'Liberation Sans',sans-serif;color:#222;direction:ltr;transform-origin:0 0;transform:scaleX(1.046);">1,188,889</div>
<div class="a" style="left:1179.4px;top:566.3px;font:bold 13.19px/13.19px 'Liberation Sans',sans-serif;color:#222;direction:ltr;transform-origin:0 0;transform:scaleX(1.070);">₪</div>
<div class="a" style="left:1161.3px;top:585.8px;font:normal 13.95px/13.95px 'Liberation Sans',sans-serif;color:#686868;direction:rtl;transform-origin:0 0;transform:scaleX(0.918);">מחיר ממוצע לקניה</div>
<div class="a" style="left:975.4px;top:565.5px;font:bold 14.06px/14.06px 'Liberation Sans',sans-serif;color:#222;direction:ltr;transform-origin:0 0;transform:scaleX(1.131);">2,900</div>
<div class="a" style="left:959.9px;top:566.3px;font:bold 13.19px/13.19px 'Liberation Sans',sans-serif;color:#222;direction:ltr;transform-origin:0 0;transform:scaleX(1.030);">₪</div>
<div class="a" style="left:901.3px;top:585.8px;font:normal 13.95px/13.95px 'Liberation Sans',sans-serif;color:#686868;direction:rtl;transform-origin:0 0;transform:scaleX(0.917);">מחיר ממוצע לשכירות</div>
<div class="a" style="left:744.7px;top:565.2px;font:bold 14.06px/14.06px 'Liberation Sans',sans-serif;color:#222;direction:ltr;transform-origin:0 0;transform:scaleX(1.065);">260</div>
<div class="a" style="left:671.7px;top:586.0px;font:normal 13.95px/13.95px 'Liberation Sans',sans-serif;color:#686868;direction:rtl;transform-origin:0 0;transform:scaleX(0.889);">דירות למכירה בעיר</div>
<div class="a" style="left:1216.0px;top:639.4px;font:bold 16.13px/16.13px 'Liberation Sans',sans-serif;color:#222;direction:rtl;transform-origin:0 0;transform:scaleX(0.945);">הליכוד</div>
<div class="a" style="left:1161.2px;top:662.5px;font:normal 13.95px/13.95px 'Liberation Sans',sans-serif;color:#686868;direction:rtl;transform-origin:0 0;transform:scaleX(0.878);">המפלגה הפופולרית</div>
<div class="a" style="left:984.9px;top:641.8px;font:bold 14.06px/14.06px 'Liberation Sans',sans-serif;color:#222;direction:ltr;transform-origin:0 0;transform:scaleX(1.115);">7/10</div>
<div class="a" style="left:923.8px;top:662.5px;font:normal 13.95px/13.95px 'Liberation Sans',sans-serif;color:#686868;direction:rtl;transform-origin:0 0;transform:scaleX(0.960);">מדד חברתי כללי</div>
<div class="a" style="left:1246.0px;top:676.8px;font:bold 20.67px/20.67px 'Liberation Sans',sans-serif;color:#a3a3a3;direction:rtl;transform-origin:0 0;transform:scaleX(0.878);">אתרוג</div>
<!--/CTEXT-->
<!--/CONTENT-->
<!--TASKBAR-->
<div class="a" style="left:0;top:728px;width:1366px;height:40px;background:linear-gradient(90deg,#d6d6d8 0,#d8d9dc 300px,#dddfe8 560px,#dfe1ea 800px,#dcdde3 975px,#d5d5d6 1366px)"></div>
<div class="a" style="left:0;top:727px;width:1366px;height:1px;background:#cfd0d4"></div>
<div class="a" style="left:4px;top:728px;width:1px;height:40px;background:#7d7f84"></div>
<!-- search box -->
<div class="a" style="left:975px;top:729px;width:343px;height:39px;background:#fff;border-top:1px solid #c8c8c8;border-bottom:1px solid #cfcfcf"></div>
<div class="a" style="left:1318px;top:728px;width:48px;height:40px;background:#d5d5d6"></div>
<svg style="left:1289px;top:738px" width="19" height="19" viewBox="0 0 19 19"><circle cx="11.600" cy="7.300" r="4.900" fill="none" stroke="#222" stroke-width="1.300"/><path d="M8.200 10.900 1.600 17.200" stroke="#222" stroke-width="1.500"/></svg>
<svg style="left:1334px;top:740px" width="16" height="16" viewBox="0 0 16 16"><path d="M0 2.200 6.600 1.300v6.200H0zM7.400 1.200 16 0v7.500H7.400zM0 8.300h6.600v6.300L0 13.700zM7.400 8.300H16V16l-8.600-1.200z" fill="#111"/></svg>
<!-- cortana -->
<svg style="left:941px;top:739px" width="18" height="18" viewBox="0 0 18 18"><circle cx="9" cy="9" r="6.600" fill="none" stroke="#111" stroke-width="2.300"/></svg>
<!-- task view -->
<svg style="left:893px;top:739px" width="19" height="18" viewBox="0 0 19 18"><path d="M6.500 1.500v15M15.500 1.500v15M4.500 2.800h14M4.500 15.200h14" stroke="#111" stroke-width="1.200" fill="none"/><rect x="6.500" y="6" width="9" height="6" fill="none" stroke="#111" stroke-width="1.200"/><rect x="0.500" y="2" width="2.500" height="2.500" fill="#111"/><rect x="0.500" y="8" width="2.500" height="2.500" fill="#111"/><rect x="0.500" y="14" width="2.500" height="2.500" fill="#111"/></svg>
<!-- camera -->
<svg style="left:839px;top:737px" width="24" height="22" viewBox="0 0 24 22"><path d="M1 6.500c0-1.100.9-2 2-2h3.500l1.800-2.500h7.400l1.800 2.500H21c1.100 0 2 .9 2 2V18c0 1.100-.9 2-2 2H3c-1.100 0-2-.9-2-2z" fill="#6b7178"/><rect x="2" y="2.500" width="3.500" height="2" fill="#3c93e8"/><circle cx="12" cy="12" r="6" fill="#d6d9df"/><circle cx="12" cy="12" r="4.600" fill="#7b6cf0"/><circle cx="13" cy="11" r="2.800" fill="#69b7f5"/></svg>
<!-- chrome 2 -->
<div class="a" style="left:782px;top:766px;width:40px;height:2px;background:#0b6cd0"></div>
<svg style="left:790px;top:735px" width="24" height="24" viewBox="0 0 24 24"><circle cx="12" cy="12" r="11.500" fill="#fbc116"/><path d="M12 12 2 6.300A11.500 11.500 0 0 1 22 6.300z" fill="#e33b2e"/><path d="M12 12 2 6.300A11.500 11.500 0 0 0 12 23.500z" fill="#2da94f" opacity="0"/><path d="M2 6.300A11.500 11.500 0 0 0 10.500 23.400L12 12z" fill="#2da94f"/><circle cx="12" cy="12" r="5.300" fill="#fff"/><circle cx="12" cy="12" r="4.200" fill="#3f86f4"/></svg>
<svg style="left:787px;top:744px" width="32" height="18" viewBox="0 0 32 18"><circle cx="8.500" cy="9" r="7.500" fill="#f3ead0" stroke="#fff" stroke-width="1"/><circle cx="22.500" cy="10.500" r="6" fill="#f3ead0" stroke="#fff" stroke-width="1"/><path d="M4 10c2-3 7-3 9 0M4 7.500h9" stroke="#d8a93a" stroke-width="1.300" fill="none"/><path d="M19 11.500c1.500-2 5.500-2 7 0M19 9.500h7" stroke="#d8a93a" stroke-width="1.200" fill="none"/></svg>
<!-- explorer -->
<div class="a" style="left:733px;top:766px;width:40px;height:2px;background:#0b6cd0"></div>
<svg style="left:741px;top:737px" width="24" height="22" viewBox="0 0 24 22"><path d="M1 2.500h7.500l2 2.500H1z" fill="#e8a526"/><rect x="1" y="4.500" width="22" height="15.500" rx="1" fill="#f8cf4d"/><rect x="1" y="4.500" width="22" height="3" fill="#fbe08a"/><path d="M5.500 20v-6.500h13V20h-3.500v-3.500h-6V20z" fill="#3a8ee6"/></svg>
<!-- mail -->
<svg style="left:692px;top:736px" width="25" height="24" viewBox="0 0 25 24"><path d="M1 9.500 12.500 1 24 9.500V22H1z" fill="#1565c0"/><path d="M3 8.500h19v9H3z" fill="#e9f1fb"/><path d="M1 10.500l11.500 7.500L24 10.500V22H1z" fill="#2f9bf0"/><path d="M1 22 12.500 14 24 22z" fill="#1e88e5"/></svg>
<!-- opera -->
<svg style="left:643px;top:735px" width="24" height="25" viewBox="0 0 24 25"><ellipse cx="12" cy="12.500" rx="11.300" ry="12" fill="#e0161f"/><ellipse cx="12" cy="12.500" rx="4.700" ry="8.400" fill="#dfe3eb"/></svg>
<!-- chrome active -->
<div class="a" style="left:585px;top:729px;width:45px;height:39px;background:#eef0f5"></div>
<div class="a" style="left:582px;top:766px;width:48px;height:2px;background:#0b6cd0"></div>
<svg style="left:595px;top:734px" width="24" height="24" viewBox="0 0 24 24"><circle cx="12" cy="12" r="11.500" fill="#fbc116"/><path d="M12 12 2 6.300A11.500 11.500 0 0 1 22 6.300z" fill="#e33b2e"/><path d="M2 6.300A11.500 11.500 0 0 0 10.500 23.400L12 12z" fill="#2da94f"/><circle cx="12" cy="12" r="5.300" fill="#fff"/><circle cx="12" cy="12" r="4.200" fill="#3f86f4"/></svg>
<div class="a" style="left:592px;top:747px;width:16px;height:16px;border-radius:8px;background:linear-gradient(180deg,#8c8a8e 0%,#a19a9c 45%,#b58a78 62%,#6e6a55 75%,#595a4a 100%);box-shadow:0 0 0 1px #e8e8e8"></div>
<!-- tray -->
<svg style="left:292px;top:744px" width="14" height="8" viewBox="0 0 14 8"><path d="M1 7.300 7 1.200l6 6.100" stroke="#111" stroke-width="1.300" fill="none"/></svg>
<svg style="left:270px;top:742px" width="14" height="14" viewBox="0 0 14 14"><path d="M1.500 12.500A11 11 0 0 1 12.500 1.500" stroke="#666" stroke-width="1.100" fill="none"/><path d="M4.500 12.500a8 8 0 0 1 8-8" stroke="#444" stroke-width="1.100" fill="none"/><path d="M7.500 12.500a5 5 0 0 1 5-5" stroke="#222" stroke-width="1.100" fill="none"/><circle cx="11.500" cy="12" r="1.500" fill="#111"/></svg>
<svg style="left:245px;top:739px" width="13" height="18" viewBox="0 0 13 18"><rect x="0.700" y="4" width="8.300" height="10" rx="1.800" fill="none" stroke="#111" stroke-width="1.100"/><path d="M9 8l3.300-1.800v5.600L9 10z" fill="none" stroke="#111" stroke-width="1"/><path d="M2 1.500c2-1.200 6-1.200 8 0M2 16.500c2 1.200 6 1.200 8 0" stroke="#111" stroke-width="1" fill="none"/></svg>
<svg style="left:218px;top:740px" width="18" height="15" viewBox="0 0 18 15"><path d="M1 5.200h3L8 1.500v12L4 9.800H1z" fill="none" stroke="#111" stroke-width="1.100" stroke-linejoin="round"/><path d="M10.300 5.200a3.300 3.300 0 0 1 0 4.600M12.300 3.200a6 6 0 0 1 0 8.600M14.400 1.300a8.800 8.800 0 0 1 0 12.400" stroke="#111" stroke-width="1" fill="none"/></svg>
<svg style="left:194px;top:742px" width="18" height="11" viewBox="0 0 18 11"><rect x="5" y="2" width="11" height="8" fill="#111"/><rect x="7" y="4" width="7.500" height="4" fill="#dfe3eb"/><rect x="16" y="4.300" width="1.500" height="3.400" fill="#111"/><path d="M2.500 0v2.500M5 0v2.500M1.500 2.500h4.500v2.500a2.200 2.200 0 0 1-4.500 0zM3.700 7v4" stroke="#111" stroke-width="1" fill="#111"/></svg>
<svg style="left:163px;top:741px" width="24" height="13" viewBox="0 0 24 13"><rect x="0.500" y="0.500" width="23" height="12" fill="none" stroke="#111" stroke-width="1"/><path d="M3 3.500h18M3 6h18" stroke="#111" stroke-width="1" stroke-dasharray="1.200 1"/><path d="M5 9h14" stroke="#111" stroke-width="1"/></svg>
<!-- notification -->
<svg style="left:24px;top:739px" width="18" height="18" viewBox="0 0 18 18"><path d="M1 0.500h16v12.500H9.500L6 16.500V13H1z" fill="#111"/><path d="M3.500 4h11M3.500 6.500h11M3.500 9h11" stroke="#dfe3eb" stroke-width=".9"/></svg>
<div class="a" style="left:17px;top:747px;width:16px;height:16px;border-radius:8px;border:1px solid #222;background:#dfe3eb;font-size:11px;line-height:14px;text-align:center;color:#111">6</div>
<!--TTEXT-->
<div class="a" style="left:1152.2px;top:740.8px;font:normal 15.46px/15.46px 'Liberation Sans',sans-serif;color:#333;direction:rtl;transform-origin:0 0;transform:scaleX(0.970);">הקלד כאן כדי לחפש</div>
<div class="a" style="left:74.3px;top:732.5px;font:normal 12.61px/12.61px 'Liberation Sans',sans-serif;color:#1a1a1a;direction:ltr;transform-origin:0 0;transform:scaleX(0.893);">16:05</div>
<div class="a" style="left:59.0px;top:750.4px;font:normal 12.61px/12.61px 'Liberation Sans',sans-serif;color:#1a1a1a;direction:ltr;transform-origin:0 0;transform:scaleX(0.913);">09/06/2022</div>
<div class="a" style="left:131.2px;top:741.5px;font:normal 12.27px/12.27px 'Liberation Sans',sans-serif;color:#1a1a1a;direction:rtl;transform-origin:0 0;transform:scaleX(0.948);">עבר</div>
<div class="a" style="left:354.1px;top:741.8px;font:normal 14.49px/14.49px 'Liberation Sans',sans-serif;color:#1a1a1a;direction:ltr;transform-origin:0 0;transform:scaleX(0.935);">33°C</div>
<div class="a" style="left:392.4px;top:742.1px;font:normal 14.12px/14.12px 'Liberation Sans',sans-serif;color:#1a1a1a;direction:rtl;transform-origin:0 0;transform:scaleX(1.062);">שמשי</div>
<!--/TTEXT-->
<!--/TASKBAR-->
</body>
</html>
